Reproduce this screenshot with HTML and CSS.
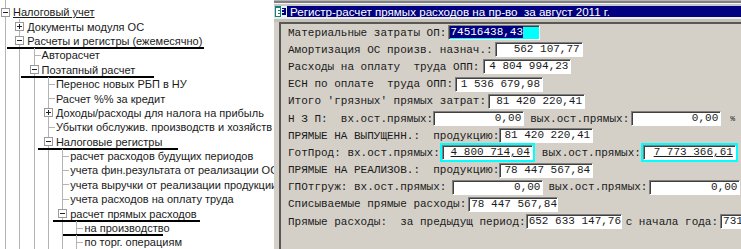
FILE: index.html
```html
<!DOCTYPE html>
<html lang="ru">
<head>
  <meta charset="UTF-8">
  <title>Регистр-расчет прямых расходов</title>
  <link rel="stylesheet" href="styles.css">
</head>
<body>
  <div class="tree">
    <ul>
      <li class="up">
        <div class="node"><i class="box minus"></i><span class="hot">Налоговый учет</span></div>
        <ul>
          <li><div class="node"><i class="box plus"></i>Документы модуля ОС</div></li>
          <li>
            <div class="node mark m1"><i class="box minus"></i>Расчеты и регистры (ежемесячно)</div>
            <ul>
              <li><div class="node"><i class="stub"></i>Авторасчет</div></li>
              <li>
                <div class="node mark m2"><i class="box minus"></i>Поэтапный расчет</div>
                <ul>
                  <li><div class="node"><i class="stub"></i>Перенос новых РБП в НУ</div></li>
                  <li><div class="node"><i class="stub"></i>Расчет %% за кредит</div></li>
                  <li><div class="node"><i class="box plus"></i>Доходы/расходы для налога на прибыль</div></li>
                  <li><div class="node"><i class="stub"></i>Убытки обслужив. производств и хозяйств</div></li>
                  <li>
                    <div class="node mark m3"><i class="box minus"></i>Налоговые регистры</div>
                    <ul>
                      <li><div class="node"><i class="stub"></i>расчет расходов будущих периодов</div></li>
                      <li><div class="node"><i class="stub"></i>учета фин.результата от реализации ОС</div></li>
                      <li><div class="node"><i class="stub"></i>учета выручки от реализации продукции</div></li>
                      <li><div class="node"><i class="stub"></i>учета расходов на оплату труда</div></li>
                      <li>
                        <div class="node mark m4"><i class="box minus"></i>расчет прямых расходов</div>
                        <ul>
                          <li><div class="node mark m5"><i class="stub"></i>на производство</div></li>
                          <li><div class="node"><i class="stub"></i>по торг. операциям</div></li>
                        </ul>
                      </li>
                    </ul>
                  </li>
                </ul>
              </li>
            </ul>
          </li>
        </ul>
      </li>
    </ul>
  </div>

  <div class="win">
    <div class="frame-top"></div>
    <div class="caption">
      <svg class="app-icon" width="12" height="11" viewBox="0 0 12 11">
        <rect x="0" y="0" width="12" height="11" fill="#e8f4f0"/>
        <rect x="0" y="0" width="6" height="11" fill="#108080"/>
        <path d="M1 2h4v2H3v1h2v2H3v1h2v2H1z" fill="#fff"/>
        <path d="M7 2h4v7H7V7h2V6H7V4h2V3H7z" fill="#000080"/>
      </svg>
      <span>Регистр-расчет прямых расходов на пр-во&nbsp; за август 2011 г.</span>
    </div>
    <div class="frame-mid"></div>

    <div class="form">
      <div class="row">
        <span class="lbl">Материальные затраты ОП:</span>
        <span class="fld sel w92 ml2"><span class="hl">74516438,43</span></span>
      </div>
      <div class="row">
        <span class="lbl">Амортизация ОС произв. назнач.:</span>
        <span class="fld w88 ml2">562 107,77</span>
      </div>
      <div class="row">
        <span class="lbl">Расходы на оплату  труда ОПП:</span>
        <span class="fld w88 ml4">4 804 994,23</span>
      </div>
      <div class="row">
        <span class="lbl">ЕСН по оплате  труда ОПП:</span>
        <span class="fld w88 ml2">1 536 679,98</span>
      </div>
      <div class="row">
        <span class="lbl">Итого 'грязных' прямых затрат:</span>
        <span class="fld w97 ml2">81 420 220,41</span>
      </div>
      <div class="row">
        <span class="lbl">Н З П:  вх.ост.прямых:</span>
        <span class="fld w91 ml0">0,00</span>
        <span class="lbl ml6">вых.ост.прямых:</span>
        <span class="fld w90 ml2">0,00</span>
        <span class="pct">%</span>
      </div>
      <div class="row">
        <span class="lbl">ПРЯМЫЕ НА ВЫПУЩЕНН.:  продукцию:</span>
        <span class="fld w94 ml0">81 420 220,41</span>
      </div>
      <div class="row">
        <span class="lbl">ГотПрод: вх.ост.прямых:</span>
        <span class="fld hot w91 ml2">4 800 714,04</span>
        <span class="lbl ml9">вых.ост.прямых:</span>
        <span class="fld hot w93 ml2">7 773 366,61</span>
      </div>
      <div class="row">
        <span class="lbl">ПРЯМЫЕ НА РЕАЛИЗОВ.:  продукцию:</span>
        <span class="fld w94 ml0">78 447 567,84</span>
      </div>
      <div class="row">
        <span class="lbl">ГПОтгруж: вх.ост.прямых:</span>
        <span class="fld w91 ml6">0,00</span>
        <span class="lbl ml5">вых.ост.прямых:</span>
        <span class="fld w91 ml2">0,00</span>
      </div>
      <div class="row">
        <span class="lbl">Списываемые прямые расходы:</span>
        <span class="fld w90 ml2">78 447 567,84</span>
      </div>
      <div class="row">
        <span class="lbl">Прямые расходы:  за предыдущ период:</span>
        <span class="fld w96 ml0">652 633 147,76</span>
        <span class="lbl ml4">с начала года:</span>
        <span class="fld ml2 left">731 281 715,60</span>
      </div>
    </div>
  </div>
</body>
</html>
```

FILE: styles.css
```css
html, body {
  margin: 0;
  height: 100%;
}

body {
  display: flex;
  width: 741px;
  height: 249px;
  overflow: hidden;
  background: #fff;
  color: #000;
}

/* дерево слева */
.tree {
  width: 274px;
  flex: none;
  overflow: hidden;
  background: #fff;
  color: #1a1a1a;
  font-family: "Liberation Sans", Arial, sans-serif;
  font-size: 11px;
}

.tree ul {
  list-style: none;
  margin: 0;
  padding: 0 0 0 14.3px;
}

.tree > ul {
  padding: 5px 0 0 0;
}

.tree li {
  position: relative;
}

.tree li::before {
  content: "";
  position: absolute;
  left: 5px;
  top: 0;
  bottom: 0;
  border-left: 1px solid #b4b4b4;
}

.tree li.up::before {
  top: -5px;
}

.node {
  display: flex;
  align-items: center;
  height: 14.4px;
  white-space: nowrap;
  position: relative;
}

.box {
  position: relative;
  z-index: 1;
  width: 9px;
  height: 9px;
  box-sizing: border-box;
  margin: 0 3px 0 1px;
  border: 1px solid #999;
  background: #fff;
  flex: none;
}

.box::before {
  content: "";
  position: absolute;
  left: 1px;
  top: 3px;
  width: 5px;
  height: 1px;
  background: #222;
}

.box.plus::after {
  content: "";
  position: absolute;
  left: 3px;
  top: 1px;
  width: 1px;
  height: 5px;
  background: #222;
}

.stub {
  width: 7px;
  margin: 0 1px 0 5px;
  border-top: 1px solid #b4b4b4;
  flex: none;
}

.hot {
  text-decoration: underline;
}

/* жирные линии-пометки поверх дерева */
.mark::after {
  content: "";
  position: absolute;
  bottom: -1px;
  height: 2px;
  background: #000;
}

.m1::after { left: -7px; width: 197px; }
.m2::after { left: -8px; width: 133px; }
.m3::after { left: -5px; width: 140px; }
.m4::after { left: -4px; width: 147px; }
.m5::after { left: -8px; width: 100px; }

/* окно регистра */
.win {
  flex: 1;
  display: flex;
  flex-direction: column;
  background: #d4d0c8;
  overflow: hidden;
}

.frame-top {
  height: 6px;
  flex: none;
  background: linear-gradient(#b4b4b4 0 1px, #808080 1px 3px, #f4f4f4 3px 4px, #c8c8c8 4px 6px);
}

.caption {
  height: 11px;
  flex: none;
  margin-left: 1px;
  display: flex;
  align-items: center;
  gap: 3px;
  background: #000080;
  color: #fff;
  font-family: "Liberation Sans", Arial, sans-serif;
  font-size: 11.6px;
  white-space: nowrap;
}

.app-icon {
  flex: none;
}

.frame-mid {
  height: 5px;
  flex: none;
  background: linear-gradient(#ececec 0 2px, #c4c0b8 2px 5px);
}

.form {
  flex: 1;
  margin-left: 5px;
  padding-left: 7px;
  border-top: 2px solid #585858;
  border-left: 2px solid #585858;
  color: #1a1a1a;
  font-family: "Liberation Mono", "Courier New", monospace;
  font-size: 11px;
}

.row {
  display: flex;
  align-items: center;
  height: 17.2px;
  white-space: pre;
}

.fld {
  height: 15px;
  box-sizing: border-box;
  flex: none;
  border-top: 1px solid #808080;
  border-left: 1px solid #808080;
  border-right: 1px solid #fff;
  border-bottom: 1px solid #fff;
  box-shadow: inset 1px 1px 0 #404040;
  background: #fff;
  padding: 0 2px 0 2px;
  line-height: 13px;
  text-align: right;
}

.fld.left {
  text-align: left;
}

.fld.sel {
  background: #00ffff;
  text-align: left;
  padding-left: 1px;
}

.hl {
  background: #000080;
  color: #fff;
}

.fld.hot {
  box-shadow: inset 1px 1px 0 #404040, 0 0 0 2px #00ffff;
}

.pct {
  margin-left: 9px;
  font-size: 8px;
}

.w88 { width: 88px; }
.w90 { width: 90px; }
.w91 { width: 91px; }
.w92 { width: 92px; }
.w93 { width: 93px; }
.w94 { width: 94px; }
.w96 { width: 96px; }
.w97 { width: 97px; }

.ml0 { margin-left: 0; }
.ml2 { margin-left: 2px; }
.ml4 { margin-left: 4px; }
.ml5 { margin-left: 5px; }
.ml6 { margin-left: 6px; }
.ml9 { margin-left: 9px; }
```
